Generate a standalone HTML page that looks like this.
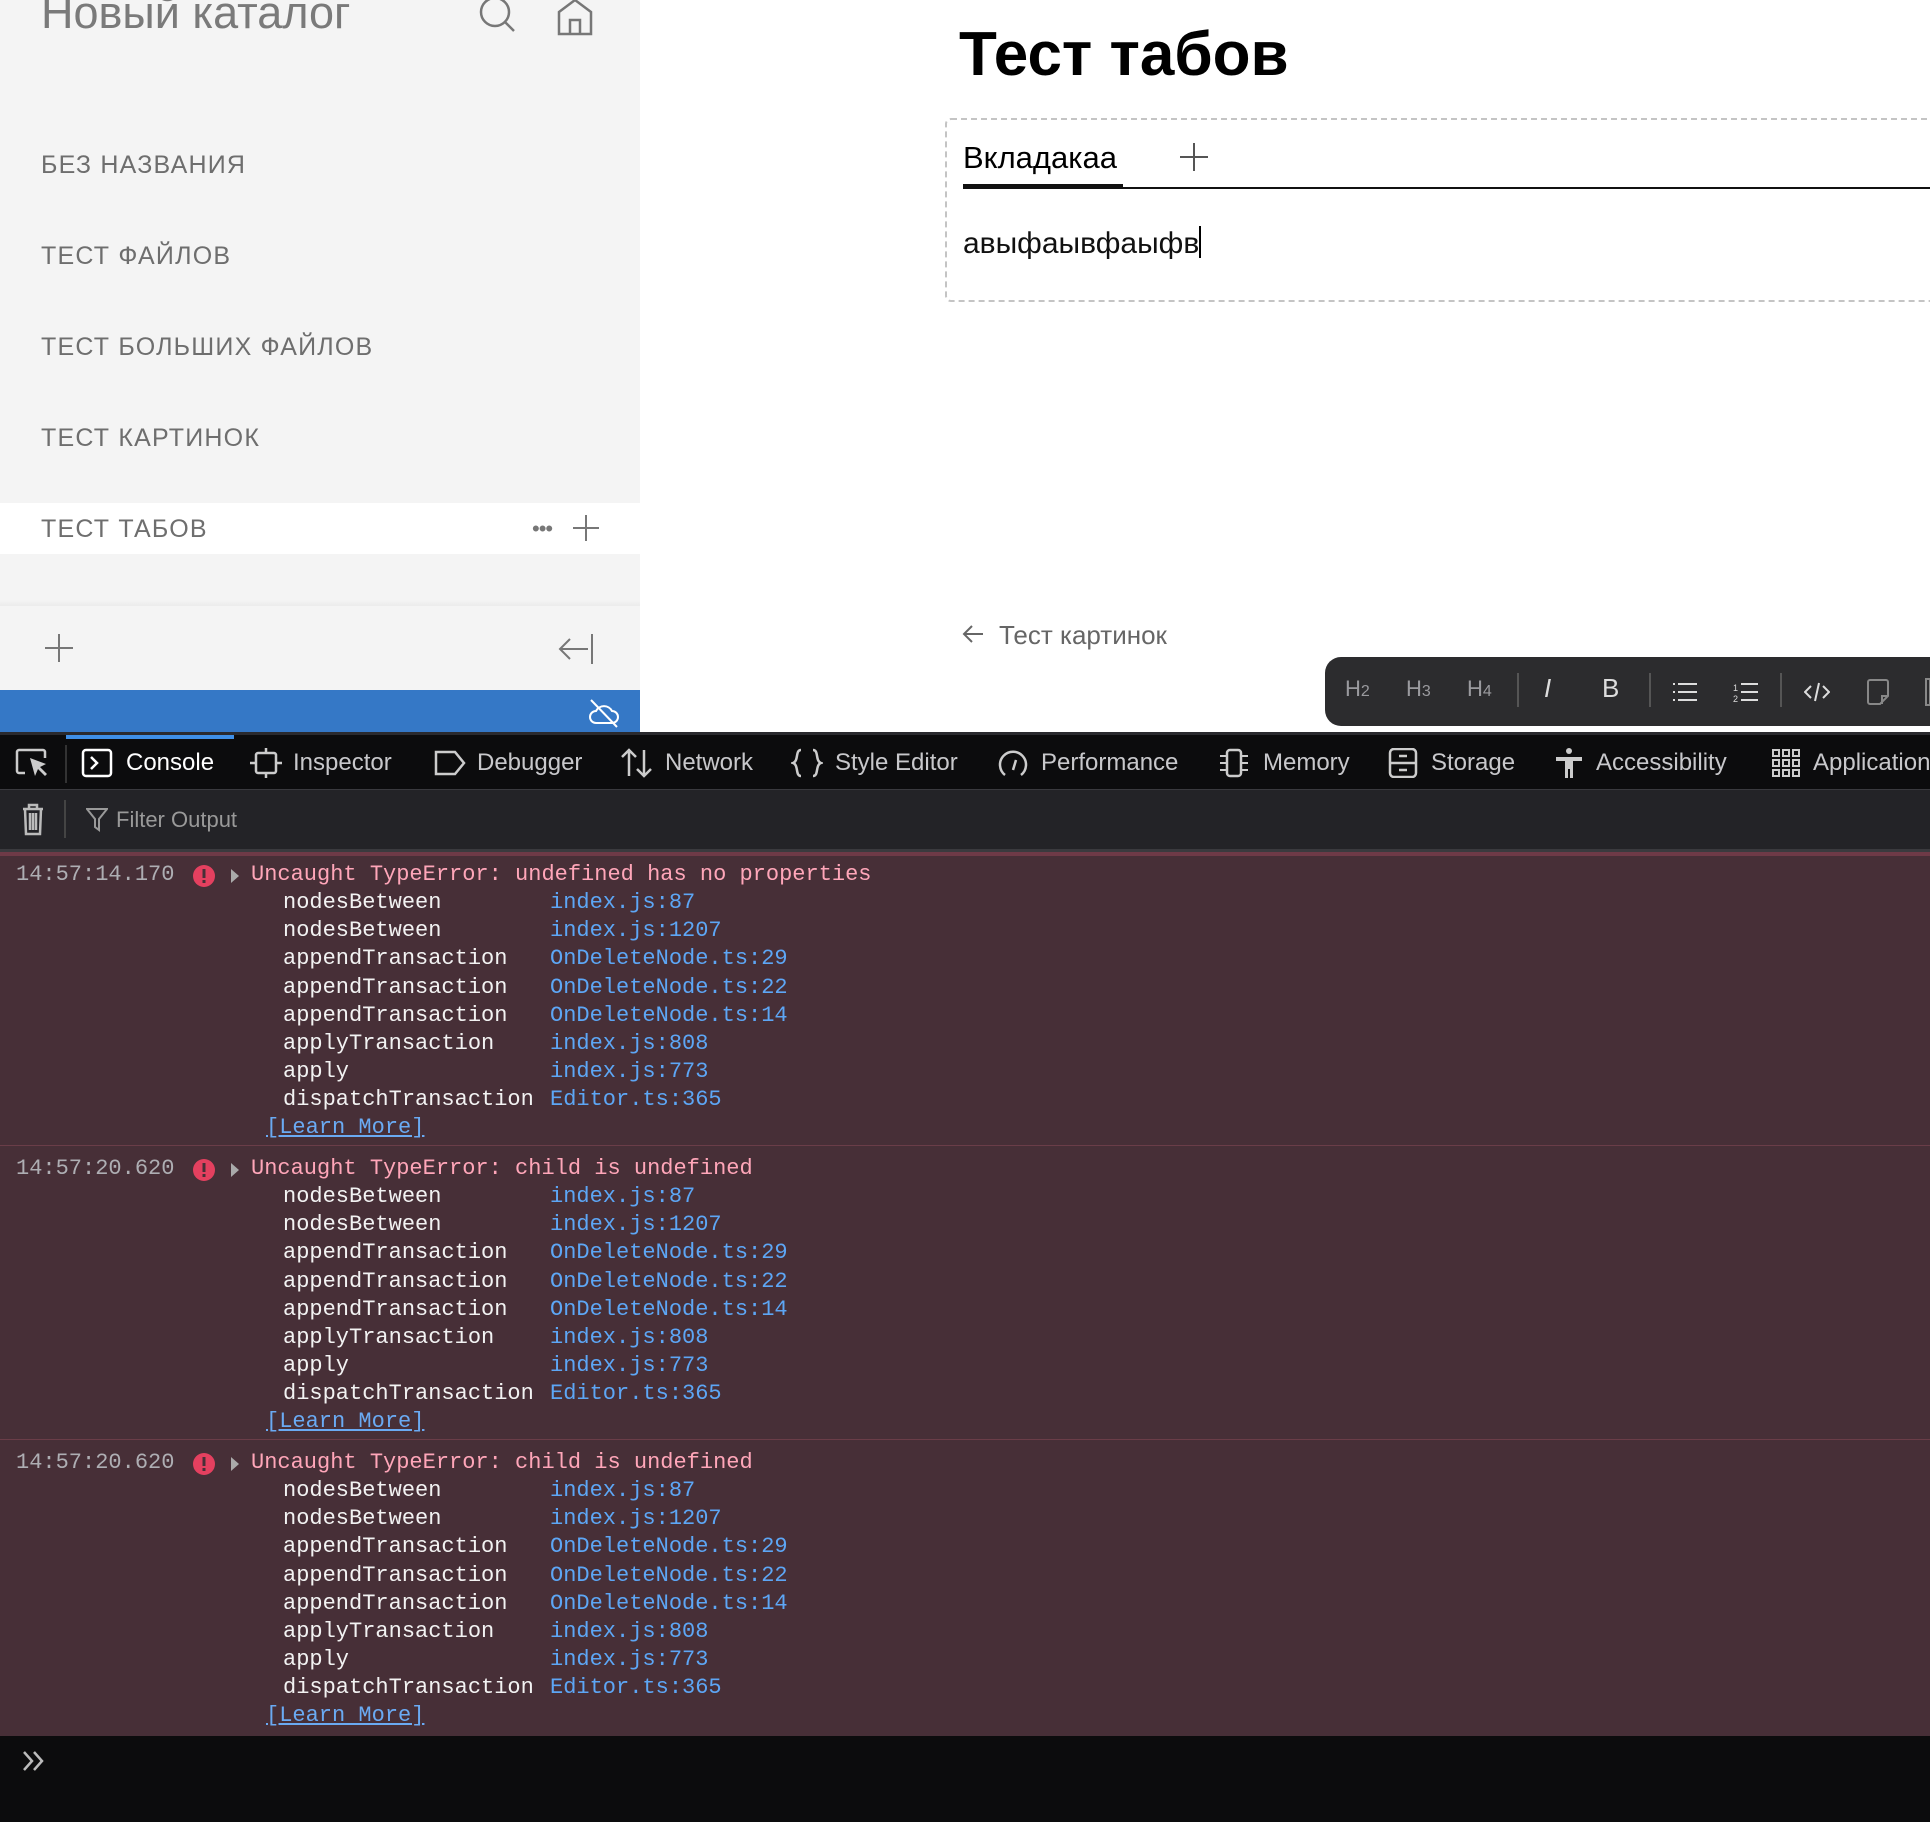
<!DOCTYPE html>
<html><head><meta charset="utf-8">
<style>
*{margin:0;padding:0;box-sizing:border-box}
body{width:1930px;height:1822px;overflow:hidden;background:#fff;font-family:"Liberation Sans","Noto Sans CJK SC",sans-serif;position:relative}
.a{position:absolute}
.side{left:0;top:0;width:640px;height:690px;background:#f4f4f4}
.mi{position:absolute;left:41px;font-size:25px;color:#6e6e6e;letter-spacing:1.2px;line-height:30px}
.dt{left:0;top:732px;width:1930px;height:1090px;background:#0c0c0d}
.tab{position:absolute;top:748px;font-size:24px;color:#c8c8cb;line-height:30px}
.tab svg{position:absolute}
.con{left:0;top:852px;width:1930px;height:884px;background:#472f37}
.blk{position:absolute;left:0;width:1930px;height:294px;border-bottom:1px solid #6a3d48;font-family:"Liberation Mono",monospace;font-size:22px;line-height:28.2px}
.l{position:absolute;white-space:pre}
.ts{color:#aeaeb3;left:16px}
.msg{color:#ffa6b9;left:251px}
.fn{color:#f2f2f2;left:283px}
.loc{color:#5da6f5;left:550px}
.lm{color:#6aaaf3;left:266px;text-decoration:underline}
.tb{position:absolute;top:676px;color:#9a9a9e;font-size:22px}
.sep{position:absolute;top:673px;width:2px;height:34px;background:#555}
</style></head><body>

<div class="a side"></div>
<div class="a" style="left:41px;top:-13px;font-size:45px;color:#7a7a7a;line-height:52px">Новый каталог</div>
<svg class="a" style="left:478px;top:0" width="40" height="36" viewBox="0 0 40 36"><circle cx="17" cy="12" r="14" fill="none" stroke="#777" stroke-width="2.5"/><line x1="27" y1="22" x2="36" y2="31" stroke="#777" stroke-width="2.5"/></svg>
<svg class="a" style="left:555px;top:0" width="40" height="36" viewBox="0 0 40 36"><path d="M4 12 L20 0 L36 12 V34 H4 Z M15 34 V20 H25 V34" fill="none" stroke="#777" stroke-width="2.5"/></svg>

<div class="mi" style="top:150px">БЕЗ НАЗВАНИЯ</div>
<div class="mi" style="top:241px">ТЕСТ ФАЙЛОВ</div>
<div class="mi" style="top:332px">ТЕСТ БОЛЬШИХ ФАЙЛОВ</div>
<div class="mi" style="top:423px">ТЕСТ КАРТИНОК</div>
<div class="a" style="left:0;top:503px;width:640px;height:51px;background:#fff"></div>
<div class="mi" style="top:514px">ТЕСТ ТАБОВ</div>
<div class="a" style="left:532px;top:516px;font-size:22px;color:#777;letter-spacing:-1px">•••</div>
<svg class="a" style="left:573px;top:514px" width="26" height="28"><path d="M13 1V27M0 14H26" stroke="#777" stroke-width="2"/></svg>

<div class="a" style="left:0;top:600px;width:640px;height:6px;background:linear-gradient(#f4f4f4,#ebebeb)"></div>
<svg class="a" style="left:45px;top:634px" width="28" height="28"><path d="M14 0V28M0 14H28" stroke="#777" stroke-width="2"/></svg>
<svg class="a" style="left:556px;top:633px" width="40" height="32"><path d="M36 1V31M32 16H4M14 6L4 16L14 26" fill="none" stroke="#777" stroke-width="2"/></svg>
<div class="a" style="left:0;top:690px;width:640px;height:42px;background:#3578c6"></div>
<svg class="a" style="left:588px;top:697px" width="32" height="32" viewBox="0 0 32 32"><path d="M8 26 H24 A6 6 0 0 0 24 14 A9 9 0 0 0 8 14 A6 6 0 0 0 8 26Z" fill="none" stroke="#fff" stroke-width="2"/><line x1="3" y1="3" x2="29" y2="30" stroke="#fff" stroke-width="2"/></svg>

<div class="a" style="left:959px;top:19px;font-size:62px;font-weight:bold;color:#000;line-height:72px;letter-spacing:0px">Тест табов</div>
<div class="a" style="left:945px;top:118px;width:1100px;height:184px;border:2px dashed #c4c4c4;border-radius:6px"></div>
<div class="a" style="left:963px;top:140px;font-size:31px;color:#000;line-height:36px">Вкладакаа</div>
<svg class="a" style="left:1180px;top:143px" width="28" height="28"><path d="M14 0V28M0 14H28" stroke="#555" stroke-width="2"/></svg>
<div class="a" style="left:963px;top:187px;width:967px;height:2px;background:#111"></div>
<div class="a" style="left:963px;top:184px;width:160px;height:5px;background:#111"></div>
<div class="a" style="left:963px;top:226px;font-size:30px;color:#111;line-height:36px">авыфаывфаыфв<span style="display:inline-block;width:2px;height:32px;background:#000;vertical-align:-5px"></span></div>

<svg class="a" style="left:962px;top:624px" width="22" height="20"><path d="M21 10H2M10 2L2 10L10 18" fill="none" stroke="#666" stroke-width="2"/></svg>
<div class="a" style="left:999px;top:620px;font-size:26px;color:#666;line-height:30px">Тест картинок</div>

<div class="a" style="left:1325px;top:657px;width:640px;height:69px;background:#2c2c2e;border-radius:16px"></div>
<div class="tb" style="left:1345px">H<small style="font-size:16px">2</small></div>
<div class="tb" style="left:1406px">H<small style="font-size:16px">3</small></div>
<div class="tb" style="left:1467px">H<small style="font-size:16px">4</small></div>
<div class="sep" style="left:1517px"></div>
<div class="tb" style="left:1544px;color:#ddd;font-style:italic;font-size:26px;top:673px">I</div>
<div class="tb" style="left:1602px;color:#ddd;font-size:26px;top:673px">B</div>
<div class="sep" style="left:1649px"></div>
<svg class="a" style="left:1672px;top:681px" width="26" height="22"><path d="M6 3H25M6 11H25M6 19H25M1 3H3M1 11H3M1 19H3" stroke="#ddd" stroke-width="2"/></svg>
<svg class="a" style="left:1733px;top:681px" width="26" height="22"><path d="M8 3H25M8 11H25M8 19H25" stroke="#ddd" stroke-width="2"/><text x="0" y="10" font-size="9" fill="#ddd" font-family="Liberation Sans">1</text><text x="0" y="21" font-size="9" fill="#ddd" font-family="Liberation Sans">2</text></svg>
<div class="sep" style="left:1780px"></div>
<svg class="a" style="left:1804px;top:680px" width="26" height="24"><path d="M7 6L1 12L7 18M19 6L25 12L19 18M15 3L11 21" fill="none" stroke="#ddd" stroke-width="2"/></svg>
<svg class="a" style="left:1866px;top:678px" width="24" height="28"><path d="M4 2H20A2 2 0 0 1 22 4V18L14 26H4A2 2 0 0 1 2 24V4A2 2 0 0 1 4 2ZM22 18H16V26" fill="none" stroke="#888" stroke-width="2"/></svg>
<div class="a" style="left:1925px;top:678px;width:6px;height:28px;border:2px solid #888"></div>

<div class="a dt"></div>
<div class="a" style="left:0;top:732px;width:1930px;height:3px;background:#2a2a2e"></div>
<div class="a" style="left:66px;top:735px;width:168px;height:4px;background:#3f8fe6"></div>
<div class="a" style="left:65px;top:745px;width:2px;height:38px;background:#333"></div>
<svg class="a" style="left:15px;top:748px" width="34" height="30"><path d="M10 25H4A2 2 0 0 1 2 23V4A2 2 0 0 1 4 2H28A2 2 0 0 1 30 4V10" fill="none" stroke="#ccc" stroke-width="2.5"/><path d="M15 10L20 28L23 21L30 28L32 26L25 19L31 16Z" fill="#ccc"/></svg>
<div class="tab" style="left:81px;color:#fff"><svg style="left:0;top:0" width="32" height="30"><rect x="2" y="2" width="28" height="26" rx="3" fill="none" stroke="#fff" stroke-width="2.5"/><path d="M10 9L16 15L10 21" fill="none" stroke="#fff" stroke-width="2.5"/></svg><span style="margin-left:45px">Console</span></div>
<div class="tab" style="left:250px"><svg style="left:0;top:0" width="32" height="30"><rect x="6" y="5" width="20" height="20" rx="2" fill="none" stroke="#ccc" stroke-width="2.5"/><path d="M16 0V5M16 25V30M0 15H6M26 15H32" stroke="#ccc" stroke-width="2.5"/></svg><span style="margin-left:43px">Inspector</span></div>
<div class="tab" style="left:433px"><svg style="left:0;top:0" width="34" height="30"><path d="M3 4H22L31 15L22 26H3Z" fill="none" stroke="#ccc" stroke-width="2.5"/></svg><span style="margin-left:44px">Debugger</span></div>
<div class="tab" style="left:620px"><svg style="left:0;top:0" width="34" height="30"><path d="M9 28V2M2 9L9 2L16 9M24 2V28M17 21L24 28L31 21" fill="none" stroke="#ccc" stroke-width="2.5"/></svg><span style="margin-left:45px">Network</span></div>
<div class="tab" style="left:791px"><svg style="left:0;top:0" width="32" height="30"><path d="M10 2C4 2 8 13 2 15C8 17 4 28 10 28M22 2C28 2 24 13 30 15C24 17 28 28 22 28" fill="none" stroke="#ccc" stroke-width="2.5"/></svg><span style="margin-left:44px">Style Editor</span></div>
<div class="tab" style="left:997px"><svg style="left:0;top:0" width="32" height="30"><path d="M8 27A13 13 0 1 1 24 27" fill="none" stroke="#ccc" stroke-width="2.5"/><path d="M16 22L19 12" stroke="#ccc" stroke-width="2.5"/></svg><span style="margin-left:44px">Performance</span></div>
<div class="tab" style="left:1218px"><svg style="left:0;top:0" width="32" height="30"><rect x="9" y="2" width="14" height="26" rx="3" fill="none" stroke="#ccc" stroke-width="2.5"/><path d="M2 8H9M2 15H9M2 22H9M23 8H30M23 15H30M23 22H30" stroke="#ccc" stroke-width="2"/></svg><span style="margin-left:45px">Memory</span></div>
<div class="tab" style="left:1388px"><svg style="left:0;top:0" width="30" height="30"><rect x="2" y="1" width="26" height="28" rx="4" fill="none" stroke="#ccc" stroke-width="2.5"/><path d="M2 15H28M11 8H19M11 22H19" stroke="#ccc" stroke-width="2.5"/></svg><span style="margin-left:43px">Storage</span></div>
<div class="tab" style="left:1554px"><svg style="left:0;top:0" width="30" height="30"><circle cx="15" cy="3" r="3" fill="#ccc"/><path d="M2 9H28V13H19V30H16V21H14V30H11V13H2Z" fill="#ccc"/></svg><span style="margin-left:42px">Accessibility</span></div>
<div class="tab" style="left:1771px"><svg style="left:0;top:0" width="30" height="30"><g fill="none" stroke="#ccc" stroke-width="2"><rect x="2" y="2" width="6" height="6"/><rect x="12" y="2" width="6" height="6"/><rect x="22" y="2" width="6" height="6"/><rect x="2" y="12" width="6" height="6"/><rect x="12" y="12" width="6" height="6"/><rect x="22" y="12" width="6" height="6"/><rect x="2" y="22" width="6" height="6"/><rect x="12" y="22" width="6" height="6"/><rect x="22" y="22" width="6" height="6"/></g></svg><span style="margin-left:42px">Application</span></div>

<div class="a" style="left:0;top:789px;width:1930px;height:60px;background:#232327;border-top:1px solid #3a3a3e"></div>
<svg class="a" style="left:20px;top:802px" width="26" height="34"><path d="M3 7H23M9 7V3H17V7M5 7L6 32H20L21 7M10 11V28M13 11V28M16 11V28" fill="none" stroke="#bbb" stroke-width="2.5"/></svg>
<div class="a" style="left:64px;top:800px;width:2px;height:38px;background:#444"></div>
<svg class="a" style="left:86px;top:808px" width="22" height="24"><path d="M1 1H21L13 11V22L9 19V11Z" fill="none" stroke="#999" stroke-width="2"/></svg>
<div class="a" style="left:116px;top:807px;font-size:22px;color:#999;line-height:26px">Filter Output</div>
<div class="a" style="left:0;top:849px;width:1930px;height:3px;background:#3a3a3e"></div>

<div class="a con"></div>
<div class="a" style="left:0;top:852px;width:1930px;height:4px;background:#6e3a47"></div>

<div class="blk" style="top:852px">
<div class="l ts" style="top:9px">14:57:14.170</div>
<svg class="l" style="left:192px;top:12px" width="24" height="24"><circle cx="12" cy="12" r="11" fill="#e4405f"/><rect x="10.5" y="5" width="3" height="9" fill="#472f37"/><rect x="10.5" y="16" width="3" height="3" fill="#472f37"/></svg>
<svg class="l" style="left:229px;top:15px" width="12" height="18"><path d="M2 2L10 9L2 16Z" fill="#aaa"/></svg>
<div class="l msg" style="top:9px">Uncaught TypeError: undefined has no properties</div>
<div class="l fn" style="top:37px">nodesBetween
nodesBetween
appendTransaction
appendTransaction
appendTransaction
applyTransaction
apply
dispatchTransaction</div>
<div class="l loc" style="top:37px">index.js:87
index.js:1207
OnDeleteNode.ts:29
OnDeleteNode.ts:22
OnDeleteNode.ts:14
index.js:808
index.js:773
Editor.ts:365</div>
<div class="l lm" style="top:262px">[Learn More]</div>
</div>

<div class="blk" style="top:1146px">
<div class="l ts" style="top:9px">14:57:20.620</div>
<svg class="l" style="left:192px;top:12px" width="24" height="24"><circle cx="12" cy="12" r="11" fill="#e4405f"/><rect x="10.5" y="5" width="3" height="9" fill="#472f37"/><rect x="10.5" y="16" width="3" height="3" fill="#472f37"/></svg>
<svg class="l" style="left:229px;top:15px" width="12" height="18"><path d="M2 2L10 9L2 16Z" fill="#aaa"/></svg>
<div class="l msg" style="top:9px">Uncaught TypeError: child is undefined</div>
<div class="l fn" style="top:37px">nodesBetween
nodesBetween
appendTransaction
appendTransaction
appendTransaction
applyTransaction
apply
dispatchTransaction</div>
<div class="l loc" style="top:37px">index.js:87
index.js:1207
OnDeleteNode.ts:29
OnDeleteNode.ts:22
OnDeleteNode.ts:14
index.js:808
index.js:773
Editor.ts:365</div>
<div class="l lm" style="top:262px">[Learn More]</div>
</div>

<div class="blk" style="top:1440px;border-bottom:none">
<div class="l ts" style="top:9px">14:57:20.620</div>
<svg class="l" style="left:192px;top:12px" width="24" height="24"><circle cx="12" cy="12" r="11" fill="#e4405f"/><rect x="10.5" y="5" width="3" height="9" fill="#472f37"/><rect x="10.5" y="16" width="3" height="3" fill="#472f37"/></svg>
<svg class="l" style="left:229px;top:15px" width="12" height="18"><path d="M2 2L10 9L2 16Z" fill="#aaa"/></svg>
<div class="l msg" style="top:9px">Uncaught TypeError: child is undefined</div>
<div class="l fn" style="top:37px">nodesBetween
nodesBetween
appendTransaction
appendTransaction
appendTransaction
applyTransaction
apply
dispatchTransaction</div>
<div class="l loc" style="top:37px">index.js:87
index.js:1207
OnDeleteNode.ts:29
OnDeleteNode.ts:22
OnDeleteNode.ts:14
index.js:808
index.js:773
Editor.ts:365</div>
<div class="l lm" style="top:262px">[Learn More]</div>
</div>

<svg class="a" style="left:22px;top:1750px" width="24" height="22"><path d="M2 2L10 11L2 20M12 2L20 11L12 20" fill="none" stroke="#bbb" stroke-width="2.5"/></svg>
</body></html>
